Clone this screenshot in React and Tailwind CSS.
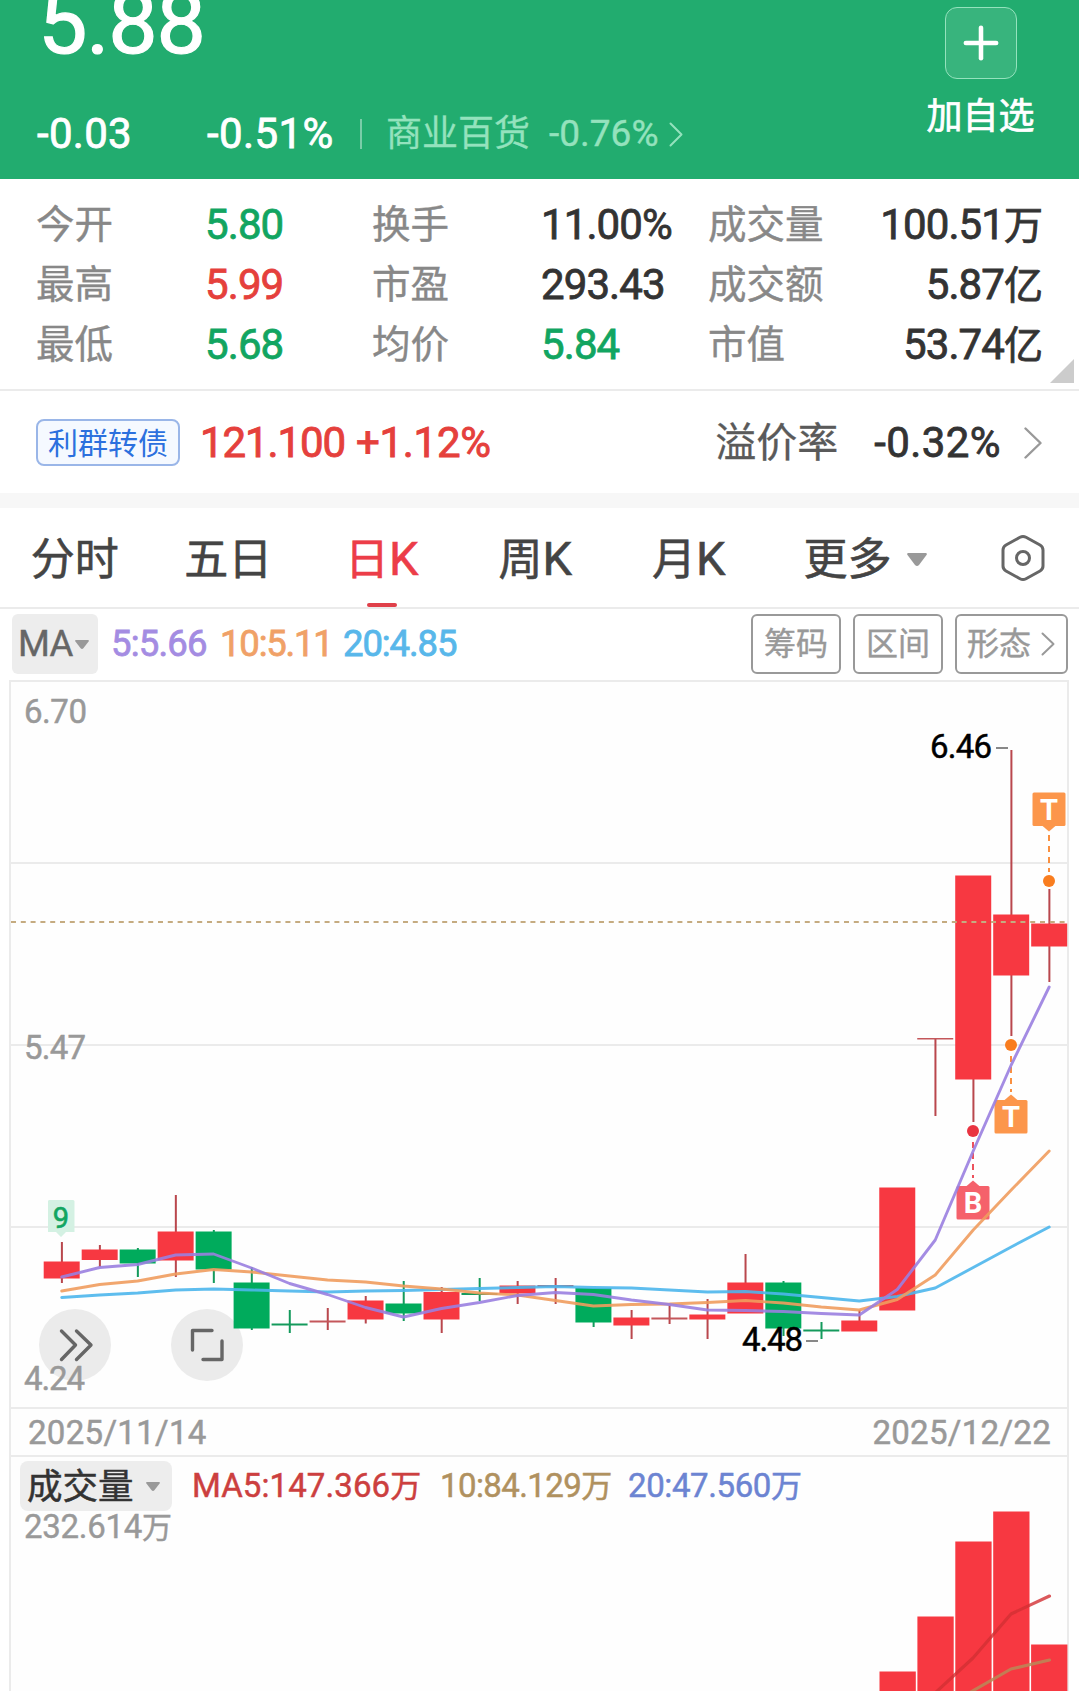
import { Plus } from 'lucide-react';

const RED = '#f73841';
const GREEN = '#00ab5c';

// up, body top, body bottom, wick top, wick bottom
const candles = [
  [1, 1261.5, 1278.5, 1242, 1283],
  [1, 1249.5, 1260, 1245, 1267],
  [0, 1249.5, 1263.5, 1248, 1277],
  [1, 1231.5, 1260.5, 1195, 1277],
  [0, 1231.5, 1269.5, 1230, 1283],
  [0, 1282.5, 1328.5, 1267, 1330],
  [0, 1323.5, 1325.5, 1310, 1333],
  [1, 1320.5, 1322.5, 1308, 1330],
  [1, 1300.5, 1319.5, 1296, 1323.5],
  [0, 1303.5, 1313.5, 1281, 1321],
  [1, 1292, 1319.5, 1287, 1333],
  [0, 1293, 1295, 1278, 1301],
  [1, 1285.5, 1293.5, 1281, 1304],
  [1, 1285, 1287, 1278, 1304],
  [0, 1288, 1322.5, 1288, 1327],
  [1, 1317.5, 1325.5, 1310, 1339],
  [1, 1317.5, 1319.5, 1305, 1324],
  [1, 1314.5, 1319.5, 1299, 1339],
  [1, 1282.5, 1313.5, 1254, 1313],
  [0, 1282.5, 1328.5, 1281, 1336],
  [0, 1329.5, 1331.5, 1322, 1339],
  [1, 1320.5, 1331.5, 1310, 1331],
  [1, 1187.5, 1310.5, 1188, 1310],
  [1, 1038, 1039.5, 1038, 1116],
  [1, 875.5, 1079.5, 876, 1122],
  [1, 914.5, 975.5, 750, 1036],
  [1, 923.5, 946.5, 889, 982],
];

const ma5 = [1277, 1267.5, 1264.5, 1255, 1254, 1268, 1283.5, 1294.5, 1307.5, 1317, 1308.5, 1302.5, 1295.5, 1292.5, 1294.5, 1300, 1304.5, 1310, 1310.5, 1311.5, 1313.5, 1315, 1289.5, 1240, 1151, 1065, 987];
const ma10 = [1291, 1284.5, 1281, 1274, 1269.5, 1272, 1276, 1280, 1282, 1286, 1289, 1293, 1295, 1300.5, 1306, 1304.5, 1304, 1302.5, 1300.5, 1303, 1307, 1310, 1299.5, 1275, 1230, 1190, 1151];
const ma20 = [1297.5, 1295, 1293, 1290, 1289, 1290, 1291, 1292, 1291, 1290.5, 1289.5, 1288.5, 1287.5, 1286.5, 1287.5, 1288, 1290, 1292, 1291.5, 1294, 1297.5, 1301, 1296.5, 1288, 1267.5, 1247, 1227];

const volumes = [1671.5, 1616.5, 1541.5, 1511.5, 1644.5];

const stats = [
  ['今开', '5.80', 'text-[#12a561]', '换手', '11.00%', 'text-[#333]', '成交量', '100.51万'],
  ['最高', '5.99', 'text-[#e5403c]', '市盈', '293.43', 'text-[#333]', '成交额', '5.87亿'],
  ['最低', '5.68', 'text-[#12a561]', '均价', '5.84', 'text-[#12a561]', '市值', '53.74亿'],
];

const tabs = ['分时', '五日', '日K', '周K', '月K'];

const cx = (i) => 61.7 + i * 37.98;
const toPoints = (arr) => arr.map((y, i) => `${cx(i)},${y}`).join(' ');

const Chevron = ({ className, w, h, stroke = 2 }) => (
  <svg className={className} width={w} height={h} viewBox={`0 0 ${w} ${h}`} fill="none">
    <path d={`M1.5 1.5 L${w - 1.5} ${h / 2} L1.5 ${h - 1.5}`} stroke="currentColor" strokeWidth={stroke} strokeLinecap="round" strokeLinejoin="round" />
  </svg>
);

const Caret = ({ className, w, h }) => (
  <svg className={className} width={w} height={h} viewBox="0 0 20 13">
    <path d="M1 0 H19 Q20.5 0.5 19.5 2 L12 12 Q10 14 8 12 L0.5 2 Q-0.5 0.5 1 0Z" fill="currentColor" />
  </svg>
);

// trade marker: dot on the candle, dashed stem, square label
const Marker = ({ x, dot, label, box, up, color, fill }) => (
  <g>
    <line x1={x} x2={x} y1={up ? dot - 46 : dot + 11} y2={up ? dot - 9 : dot + 47} stroke={color} strokeWidth="2" strokeDasharray="6 5" strokeOpacity="0.85" />
    <circle cx={x} cy={dot} r="6" fill={color} />
    <rect x={x - 16.5} y={box} width="33" height="33.5" rx="1.5" fill={fill} />
    {up
      ? <path d={`M${x - 7} ${box + 33} h14 l-7 6z`} fill={fill} />
      : <path d={`M${x - 7} ${box + 0.5} h14 l-7 -6z`} fill={fill} />}
    <text x={x} y={box + 27} fontSize="29" fontWeight="700" fill="#fff" textAnchor="middle">{label}</text>
  </g>
);

const PriceChart = () => (
  <svg className="block" width="1057" height="725" viewBox="11 682 1057 725">
    {[863, 1045, 1227].map((y) => (
      <rect key={y} x="11" y={y - 1} width="1057" height="2" fill="#ebebeb" />
    ))}

    <circle cx="75" cy="1345" r="36" fill="#ebebeb" />
    <circle cx="207" cy="1345" r="36" fill="#ebebeb" />
    <g fill="none" stroke="#666" strokeWidth="3.4" strokeLinecap="round" strokeLinejoin="round">
      <path d="M61.5 1331 L75.5 1345 L61.5 1359.500" />
      <path d="M76.500 1331 L91 1345 L76.500 1359.500" />
      <path d="M192.500 1350 V1330.500 H212" />
      <path d="M222 1341 V1359.500 H203" />
    </g>

    <g fontSize="33" fill="#999" stroke="#999" strokeWidth="0.5">
      <text x="24" y="723" textLength="63">6.70</text>
      <text x="24" y="1059" textLength="62">5.47</text>
      <text x="24" y="1390" textLength="61">4.24</text>
    </g>

    {candles.map(([up, top, bottom, high, low], i) => (
      <g key={i}>
        <rect x={cx(i) - 0.8} y={high} width="2" height={low - high} fill={up ? '#b9474d' : '#149a5c'} />
        <rect x={cx(i) - 18} y={top} width="36" height={bottom - top} fill={bottom - top > 2 ? (up ? RED : GREEN) : (up ? '#c4575b' : '#149a5c')} />
      </g>
    ))}

    <line x1="11" x2="1068" y1="922" y2="922" stroke="#c5ab80" strokeWidth="2" strokeDasharray="5 4.800" />

    <Marker x={1049} dot={881} label="T" box={792.5} up color="#f97d1f" fill="#fc964b" />
    <Marker x={1011} dot={1045} label="T" box={1100} color="#f97d1f" fill="#fc964b" />
    <Marker x={973} dot={1131} label="B" box={1186} color="#e93441" fill="#f5616b" />

    <g fill="none" strokeWidth="2.900" strokeLinejoin="round" strokeLinecap="round">
      <polyline points={toPoints(ma20)} stroke="#4db6ec" strokeOpacity="0.9" />
      <polyline points={toPoints(ma10)} stroke="#f09c5e" strokeOpacity="0.9" />
      <polyline points={toPoints(ma5)} stroke="#9a80e0" strokeOpacity="0.9" />
    </g>

    <path d="M49 1200 H73 Q74.500 1200 74.500 1201.500 V1232 H66 L61 1237 L56 1232 H48 V1201.500 Q48 1200 49 1200Z" fill="#d4f1e3" />
    <text x="61" y="1228" fontSize="29" fill="#12a561" stroke="#12a561" strokeWidth="0.6" textAnchor="middle">9</text>

    <g fontSize="33" fill="#000" stroke="#000" strokeWidth="0.5">
      <text x="930" y="758" textLength="62">6.46</text>
      <text x="742" y="1351" textLength="61">4.48</text>
    </g>
    <rect x="996" y="747" width="12" height="2" fill="#888" />
    <rect x="806" y="1340" width="12" height="2" fill="#888" />
  </svg>
);

const VolumeChart = () => (
  <svg className="absolute inset-0" width="1057" height="234" viewBox="11 1457 1057 234">
    {volumes.map((y, i) => (
      <rect key={i} x={879.5 + i * 37.9} y={y} width="36.300" height={1691 - y} fill={RED} />
    ))}
    <g fill="none" strokeWidth="3.100" strokeLinejoin="round" strokeLinecap="round">
      <polyline points="935,1693 973,1658 1011,1614 1049.500,1596" stroke="#d22f33" strokeOpacity="0.8" />
      <polyline points="969,1693 1011,1669 1049.500,1660" stroke="#b98a58" strokeOpacity="0.85" />
    </g>
  </svg>
);

const App = () => {
  return (
    <div className="w-[1079px] h-[1691px] overflow-hidden bg-white font-[Roboto,'Noto_Sans_CJK_SC',sans-serif] flex flex-col whitespace-nowrap">
      <header className="h-[179px] shrink-0 bg-[#22ac6f] text-white flex justify-between overflow-hidden">
        <div className="flex flex-col pl-9">
          <div className="h-[43px] leading-[46px] pl-[2px] text-[88px] [-webkit-text-stroke:1.2px] tracking-[-1.2px]">5.88</div>
          <div className="mt-[67px] h-12 flex items-center text-[42px] leading-[48px]">
            <div className="w-[170px] [-webkit-text-stroke:0.8px] tracking-[0.3px] pl-px">-0.03</div>
            <div className="w-[154px] [-webkit-text-stroke:0.8px] tracking-[0.4px] pl-px">-0.51%</div>
            <div className="w-[2px] h-[30px] bg-white/40" />
            <div className="flex items-center text-[#94e2bd] pl-6">
              <span className="text-[36px] [-webkit-text-stroke:0.3px]">商业百货</span>
              <span className="text-[37px] ml-[19px] [-webkit-text-stroke:0.4px]">-0.76%</span>
              <Chevron className="ml-[11px]" w={14} h={25} />
            </div>
          </div>
        </div>
        <div className="w-[107px] mr-[45px] pt-[7px] flex flex-col items-center">
          <div className="size-[72px] rounded-xl border border-[#94e2bd] bg-white/10 flex items-center justify-center">
            <Plus size={52} strokeWidth={2.1} />
          </div>
          <div className="h-[70px] leading-[76px] text-[36px] [-webkit-text-stroke:0.7px]">加自选</div>
        </div>
      </header>

      <section className="relative h-[212px] shrink-0 pt-[16px] border-b-2 border-[#ebebeb]">
        {stats.map(([l1, v1, c1, l2, v2, c2, l3, v3]) => (
          <div key={l1} className="h-[60px] pl-9 pr-9 grid grid-cols-[169px_167px_169px_168px_1fr] items-center text-[42px] leading-[60px] [-webkit-text-stroke:0.8px] tracking-[-0.9px]">
            <span className="text-[38.5px] text-[#888] tracking-normal [-webkit-text-stroke:0.4px]">{l1}</span>
            <span className={c1}>{v1}</span>
            <span className="text-[38.5px] text-[#888] tracking-normal [-webkit-text-stroke:0.4px]">{l2}</span>
            <span className={c2}>{v2}</span>
            <div className="flex justify-between items-center text-[#333]">
              <span className="-ml-px text-[38.5px] text-[#888] tracking-normal [-webkit-text-stroke:0.4px]">{l3}</span>
              <span>{v3.slice(0, -1)}<span className="text-[39px] leading-none tracking-normal">{v3.slice(-1)}</span></span>
            </div>
          </div>
        ))}
        <svg className="absolute right-[5px] bottom-[6px]" width="24" height="24">
          <path d="M24 0 V24 H0Z" fill="#ccc" />
        </svg>
      </section>

      <section className="h-[102px] shrink-0 pt-[1px] pl-9 pr-[37px] flex items-center text-[42px] leading-[62px]">
        <span className="w-[144px] h-[47px] leading-[45px] rounded-lg border-2 border-[#9ab6e8] bg-[#f5f9ff] text-[#2c70de] text-[30px] text-center">利群转债</span>
        <span className="ml-[20px] [-webkit-text-stroke:0.9px] text-[#e5403c] tracking-[-1.1px]">121.100</span>
        <span className="ml-[11px] [-webkit-text-stroke:0.9px] text-[#e5403c] tracking-[-0.3px]">+1.12%</span>
        <span className="ml-auto text-[41px] leading-[66px] text-[#5a5a5a] [-webkit-text-stroke:0.3px]">溢价率</span>
        <span className="ml-[36px] [-webkit-text-stroke:0.8px] text-[#333] tracking-[0.4px]">-0.32%</span>
        <Chevron className="ml-[23px] text-[#999]" w={18} h={32} stroke={2.4} />
      </section>

      <div className="h-[15px] shrink-0 bg-[#f7f7f7]" />

      <nav className="h-[101px] shrink-0 border-b-2 border-[#ebebeb] flex items-center text-[44px] [-webkit-text-stroke:0.6px] text-[#444]">
        {tabs.map((tab) => (
          <div key={tab} className={`relative -left-[2px] w-[153.5px] h-full flex items-center justify-center ${tab == '日K' ? 'text-[#ec3d48]' : ''}`}>
            <span className="pt-[5px]">{tab.replace('K', '')}{tab.includes('K') && <span className="text-[47px] leading-none">K</span>}</span>
            {tab == '日K' && <div className="absolute bottom-0 w-[30px] h-1 rounded-full bg-[#e0404a]" />}
          </div>
        ))}
        <div className="ml-[36px] flex items-center">
          <span className="pt-[5px]">更多</span>
          <Caret className="ml-[15px] mt-[3px] text-[#999]" w={20} h={13} />
        </div>
        <svg className="ml-auto mr-[34px]" width="44" height="48" viewBox="0 0 44 48" fill="none" stroke="#666" strokeWidth="3">
          <path d="M19 3.300 Q22 1.600 25 3.300 L39 11 Q42 12.800 42 16 V32 Q42 35.200 39 37 L25 44.700 Q22 46.400 19 44.700 L5 37 Q2 35.200 2 32 V16 Q2 12.800 5 11Z" />
          <circle cx="22" cy="24" r="6.500" />
        </svg>
      </nav>

      <div className="h-[71px] shrink-0 pl-3 pr-[11px] pb-[1px] flex items-center text-[36.5px] leading-[64px]">
        <div className="w-[86px] h-[60px] rounded-md bg-[#ededed] text-[#666] flex items-center pl-[6px] leading-[58px] [-webkit-text-stroke:0.4px]">
          <span className="tracking-[-0.8px]">MA</span>
          <Caret className="ml-[3px] text-[#999]" w={14} h={9} />
        </div>
        <span className="ml-[13px] w-[109px] text-[#a48ce2] [-webkit-text-stroke:0.8px] tracking-[-0.8px]">5:5.66</span>
        <span className="w-[123px] text-[#f0a167] [-webkit-text-stroke:0.8px] tracking-[-1.2px]">10:5.11</span>
        <span className="text-[#58b7ea] [-webkit-text-stroke:0.8px] tracking-[-1.1px]">20:4.85</span>
        <div className="ml-auto flex gap-3 text-[32px] leading-[57px] text-[#999] text-center [-webkit-text-stroke:0.4px]">
          <div className="w-[90px] h-[60px] rounded-md border-2 border-[#999]">筹码</div>
          <div className="w-[90px] h-[60px] rounded-md border-2 border-[#999]">区间</div>
          <div className="w-[113px] h-[60px] rounded-md border-2 border-[#999] flex items-center pl-[10px]">
            形态
            <Chevron className="ml-[10px]" w={14} h={24} />
          </div>
        </div>
      </div>

      <main className="ml-[9px] w-[1060px] h-[1011px] border-x-2 border-t-2 border-[#ebebeb] bg-[#fefefe]">
        <PriceChart />
        <div className="h-[50px] border-y-2 border-[#ebebeb] flex items-center justify-between pl-[17px] pr-[16px] pt-[2px] text-[33px] text-[#999] [-webkit-text-stroke:0.5px] tracking-[0.3px]">
          <span>2025/11/14</span>
          <span>2025/12/22</span>
        </div>
        <div className="relative h-[232px] pt-[4px]">
          <VolumeChart />
          <div className="relative flex items-center text-[33px] leading-[56px] h-[50px] [-webkit-text-stroke:0.5px]">
            <div className="ml-[9px] w-[152px] h-[50px] rounded-lg bg-[#ededed] flex items-center pl-[7px] text-[35.5px] leading-[52px] text-[#333]">
              <span className="pt-[2px]">成交量</span>
              <Caret className="ml-[12px] text-[#999]" w={14} h={9} />
            </div>
            <span className="ml-[20px] w-[248px] text-[#cc3f3f] tracking-[0.1px]">MA5:147.366<span className="text-[31px] leading-none">万</span></span>
            <span className="w-[188px] text-[#b0915f] tracking-[-0.6px]">10:84.129<span className="text-[31px] leading-none">万</span></span>
            <span className="text-[#6c84d2] tracking-[-0.4px]">20:47.560<span className="text-[31px] leading-none">万</span></span>
          </div>
          <div className="relative pl-[13px] text-[33px] leading-[31px] text-[#999] tracking-[-0.3px] [-webkit-text-stroke:0.4px]">232.614<span className="text-[30px] leading-none">万</span></div>
        </div>
      </main>
    </div>
  );
};

export default App;
